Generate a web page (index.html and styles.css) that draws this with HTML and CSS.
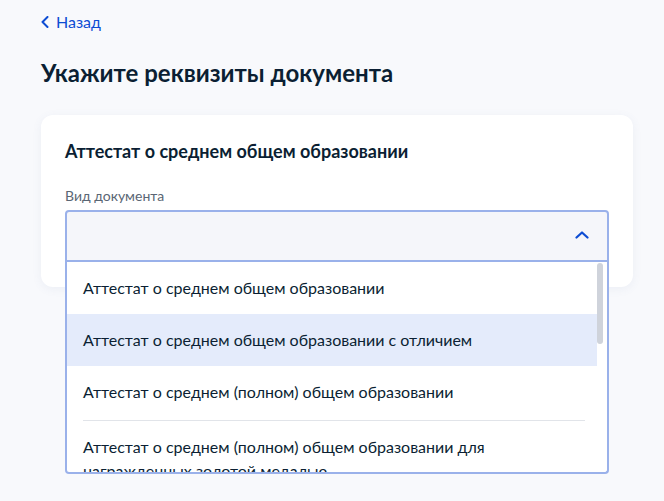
FILE: index.html
```html
<!DOCTYPE html>
<html lang="ru">
<head>
<meta charset="utf-8">
<link rel="stylesheet" href="styles.css">
</head>
<body>
<main class="page">
  <a class="back" href="#">
    <svg class="back-icon" width="8" height="12" viewBox="0 0 8 12"><path d="M6.5 1 L1.5 6 L6.5 11" fill="none" stroke="#0d4cd3" stroke-width="2" stroke-linecap="round" stroke-linejoin="round"/></svg>
    <span>Назад</span>
  </a>
  <h1 class="title">Укажите реквизиты документа</h1>
  <section class="card">
    <h2 class="card-title">Аттестат о среднем общем образовании</h2>
    <div class="label">Вид документа</div>
    <div class="select">
      <div class="select-box">
        <svg class="chevron" width="14" height="8" viewBox="0 0 14 8"><path d="M1.5 6.5 L7 1.5 L12.5 6.5" fill="none" stroke="#0d4cd3" stroke-width="2.2" stroke-linecap="round" stroke-linejoin="round"/></svg>
      </div>
      <div class="dropdown">
        <ul class="list">
          <li class="item">Аттестат о среднем общем образовании</li>
          <li class="item active">Аттестат о среднем общем образовании с отличием</li>
          <li class="item divided">Аттестат о среднем (полном) общем образовании</li>
          <li class="item">Аттестат о среднем (полном) общем образовании для награжденных золотой медалью</li>
        </ul>
        <div class="thumb"></div>
      </div>
    </div>
  </section>
</main>
</body>
</html>
```

FILE: styles.css
```css
* { box-sizing: border-box; }
html, body { margin: 0; padding: 0; }
body {
  background: #f8f9fc;
  font-family: Lato, "Noto Sans", sans-serif;
  color: #0b1f33;
  width: 664px;
  height: 501px;
  overflow: hidden;
}
.page {
  padding: 10px 31px 0 41px;
}
.back {
  display: flex;
  align-items: center;
  gap: 7px;
  color: #0d4cd3;
  text-decoration: none;
  font-size: 16px;
  line-height: 24px;
  height: 24px;
}
.back-icon { display: block; }
.title {
  margin: 23px 0 0;
  font-size: 24px;
  line-height: 32px;
  font-weight: 700;
}
.card {
  margin-top: 26px;
  background: #fff;
  border-radius: 12px;
  box-shadow: 0 2px 10px rgba(90, 110, 160, 0.08);
  padding: 24px 24px 25px;
  width: 592px;
}
.card-title {
  margin: 0;
  font-size: 18px;
  line-height: 24px;
  font-weight: 700;
}
.label {
  margin-top: 23px;
  font-size: 14px;
  line-height: 20px;
  color: #5a6674;
}
.select {
  position: relative;
  margin-top: 4px;
}
.select-box {
  height: 52px;
  background: #f5f6fa;
  border: 2px solid #9ab1ea;
  border-radius: 4px 4px 0 0;
  display: flex;
  align-items: center;
  justify-content: flex-end;
  padding-right: 18px;
}
.chevron { display: block; margin-top: -2px; }
.dropdown {
  position: absolute;
  top: 100%;
  left: 0;
  right: 0;
  height: 212px;
  background: #fff;
  border: 2px solid #9ab1ea;
  border-top: none;
  border-radius: 0 0 4px 4px;
  overflow: hidden;
  z-index: 2;
}
.list {
  list-style: none;
  margin: 0;
  padding: 0 10px 0 0;
}
.item {
  padding: 14px 16px;
  font-size: 16px;
  line-height: 24px;
  position: relative;
}
.item.active { background: #e4ebfb; }
.item.divided { padding-bottom: 17px; }
.item.divided::after {
  content: "";
  position: absolute;
  left: 16px;
  right: 12px;
  bottom: 0;
  height: 1px;
  background: #e1e4e9;
}
.thumb {
  position: absolute;
  top: 1px;
  right: 4px;
  width: 6px;
  height: 81px;
  border-radius: 3px;
  background: #cfd3db;
}
```
